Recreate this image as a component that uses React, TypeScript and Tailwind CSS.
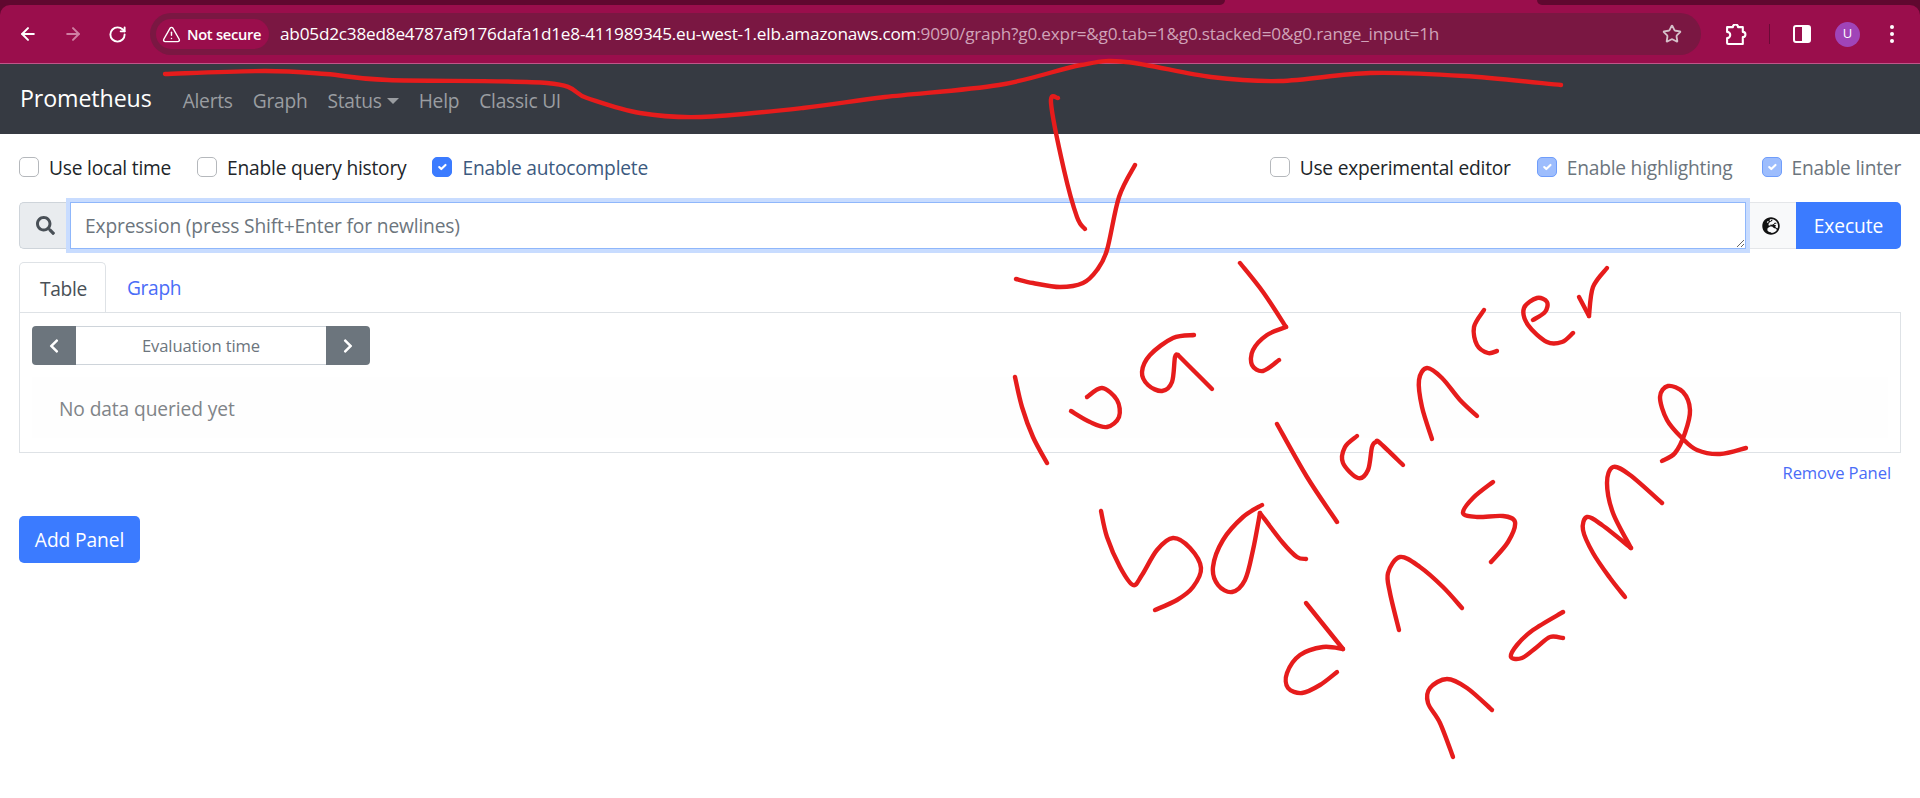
import React from 'react';
import { ArrowLeft, ArrowRight, RotateCw, TriangleAlert, Star } from 'lucide-react';
import { FaSearch, FaGlobeEurope, FaChevronLeft, FaChevronRight } from 'react-icons/fa';

type Pt = [number, number];

// red marker scribbles on top of the screenshot, split at sharp corners
const STROKES: Pt[][] = [
  [[165, 74], [265, 71], [326, 74], [388, 80], [547, 83], [587, 98], [640, 113], [701, 117], [803, 108], [885, 97], [999, 85], [1081, 65], [1126, 62], [1211, 77], [1280, 81], [1370, 73], [1464, 76], [1561, 85]],
  [[1058, 98], [1051, 103], [1064, 170], [1077, 217], [1085, 229]],
  [[1135, 165], [1119, 197], [1107, 250], [1097, 270], [1083, 283], [1060, 287], [1033, 283], [1016, 279]],
  [[1015, 377], [1022, 407], [1033, 437], [1047, 463]],
  [[1071, 411], [1090, 422], [1107, 427], [1119, 417], [1117, 400], [1102, 388], [1087, 397]],
  [[1194, 335], [1173, 338], [1150, 355], [1142, 372], [1148, 385], [1162, 391], [1172, 382], [1175, 357], [1178, 355]],
  [[1178, 355], [1195, 372], [1212, 389]],
  [[1240, 263], [1263, 292], [1286, 327]],
  [[1286, 327], [1267, 335], [1253, 350], [1252, 365], [1263, 371], [1279, 360]],
  [[1101, 511], [1107, 537], [1120, 567], [1133, 585], [1142, 575], [1157, 550], [1173, 538], [1190, 548], [1201, 568], [1193, 587], [1177, 600], [1155, 610]],
  [[1262, 505], [1243, 517], [1223, 540], [1213, 567], [1218, 585], [1232, 592], [1245, 580], [1253, 550], [1260, 513]],
  [[1260, 513], [1283, 543], [1297, 557], [1306, 559]],
  [[1277, 424], [1307, 477], [1337, 522]],
  [[1357, 436], [1345, 447], [1343, 463], [1358, 478], [1368, 470], [1372, 447], [1376, 442], [1380, 443], [1403, 465]],
  [[1432, 439], [1422, 407], [1419, 380], [1427, 368], [1442, 378], [1460, 400], [1477, 416]],
  [[1484, 310], [1474, 327], [1477, 345], [1488, 353], [1497, 351]],
  [[1533, 320], [1545, 312], [1547, 302], [1537, 298], [1524, 308], [1528, 325], [1547, 342], [1562, 342], [1573, 333]],
  [[1579, 297], [1589, 316]],
  [[1589, 316], [1593, 287], [1607, 268]],
  [[1306, 603], [1343, 649]],
  [[1343, 649], [1323, 647], [1300, 655], [1287, 673], [1288, 688], [1302, 693], [1320, 685], [1337, 672]],
  [[1399, 630], [1390, 593], [1388, 573], [1400, 557], [1420, 567], [1443, 587], [1462, 608]],
  [[1493, 482], [1473, 498], [1463, 513], [1477, 517], [1503, 516], [1515, 522], [1508, 542], [1491, 562]],
  [[1453, 757], [1440, 723], [1428, 703], [1430, 688], [1447, 679], [1467, 688], [1492, 710]],
  [[1563, 612], [1533, 630], [1517, 645], [1511, 657], [1522, 658], [1537, 647], [1550, 637], [1563, 638]],
  [[1625, 597], [1610, 578], [1593, 553], [1583, 530], [1587, 517], [1602, 525], [1631, 548]],
  [[1631, 548], [1613, 513], [1607, 483], [1613, 467], [1630, 475], [1662, 503]],
  [[1662, 461], [1675, 453], [1685, 433], [1690, 410], [1683, 392], [1668, 386], [1660, 397], [1667, 420], [1682, 438], [1697, 450], [1720, 454], [1746, 448]],
];

// catmull-rom through the points so the marker line stays smooth
const toPath = (pts: Pt[]) => {
  let d = `M${pts[0][0]} ${pts[0][1]}`;
  for (let i = 0; i < pts.length - 1; i++) {
    const p0 = pts[Math.max(i - 1, 0)];
    const p1 = pts[i];
    const p2 = pts[i + 1];
    const p3 = pts[Math.min(i + 2, pts.length - 1)];
    const c1x = p1[0] + (p2[0] - p0[0]) / 6;
    const c1y = p1[1] + (p2[1] - p0[1]) / 6;
    const c2x = p2[0] - (p3[0] - p1[0]) / 6;
    const c2y = p2[1] - (p3[1] - p1[1]) / 6;
    d += ` C${c1x} ${c1y} ${c2x} ${c2y} ${p2[0]} ${p2[1]}`;
  }
  return d;
};

const Check = ({ checked, faded }: { checked?: boolean; faded?: boolean }) => (
  <span
    className={
      'flex h-[20px] w-[20px] shrink-0 items-center justify-center rounded-[5px] border ' +
      (checked
        ? faded
          ? 'border-[#6f9dfb] bg-[#9dbdfd]'
          : 'border-[#3b7bff] bg-[#3b7bff]'
        : 'border-[#b5b8bc] bg-white')
    }
  >
    {checked && (
      <svg width="14" height="14" viewBox="0 0 20 20" fill="none" stroke="#fff" strokeWidth="3" strokeLinecap="round" strokeLinejoin="round">
        <path d="M6 10l3 3l6-6" />
      </svg>
    )}
  </span>
);

const Option = ({ label, checked, faded, color }: { label: string; checked?: boolean; faded?: boolean; color: string }) => (
  <label className="flex items-center gap-[10px]">
    <Check checked={checked} faded={faded} />
    <span className={'pt-[2px] tracking-[-0.22px] ' + color}>{label}</span>
  </label>
);

export default function App() {
  return (
    <div className="relative h-[798px] w-full overflow-hidden bg-white font-['Open_Sans',sans-serif] text-[19.2px] tracking-[-0.1px]">
      {/* Browser chrome */}
      <div className="bg-[#60082f]">
        <div className="flex h-[5px] bg-[#9a0e4c]">
          <div className="w-[1225px] rounded-br-[5px] bg-[#60082f]" />
          <div className="ml-auto w-[383px] rounded-bl-[5px] bg-[#60082f]" />
        </div>
        <div className="flex h-[59px] items-center rounded-t-[10px] border-b border-[#c0568a] bg-[#9a0e4c] pl-[18px]">
          <ArrowLeft size={20} strokeWidth={2.4} className="text-white" />
          <ArrowRight size={20} strokeWidth={2.4} className="ml-[25px] text-[#cf7fa3]" />
          <RotateCw size={19} strokeWidth={2.4} className="ml-[25px] text-white" />
          <div className="ml-[23px] flex h-[42px] w-[1551px] shrink-0 items-center rounded-full bg-[#7a1742] pr-[19px] pl-[6px]">
            <div className="flex h-[30px] w-[113px] items-center gap-[6px] rounded-full bg-[#9a0e4c] pl-[6px] text-[14.7px] font-semibold tracking-[-0.3px] text-white">
              <TriangleAlert size={19} strokeWidth={1.8} />
              <span>Not secure</span>
            </div>
            <div className="ml-[11px] text-[17.2px] tracking-[-0.21px] text-white">
              ab05d2c38ed8e4787af9176dafa1d1e8-411989345.eu-west-1.elb.amazonaws.com
              <span className="text-[#cfa3b8]">:9090/graph?g0.expr=&amp;g0.tab=1&amp;g0.stacked=0&amp;g0.range_input=1h</span>
            </div>
            <Star size={20} strokeWidth={2.2} className="ml-auto text-[#d5c0c9]" />
          </div>
          <svg width="22" height="21" viewBox="0 0 21 20" className="ml-[24px] shrink-0" fill="none" stroke="#fff" strokeWidth="2" strokeLinejoin="round">
            <path d="M2 3H7.5a2.5 2.5 0 0 1 5 0H17V7.5a2.5 2.5 0 0 1 0 5V19H3a1 1 0 0 1-1-1V13.5a3 3 0 0 0 0-6V3Z" />
          </svg>
          <div className="ml-[22px] h-[20px] w-px shrink-0 bg-[#6b0a36]" />
          <svg width="18" height="18" viewBox="0 0 18 18" className="ml-[23px] shrink-0">
            <rect x="1" y="1" width="16" height="16" rx="2" fill="none" stroke="#fff" strokeWidth="2" />
            <rect x="9" y="1" width="8" height="16" fill="#fff" />
          </svg>
          <div className="ml-[24px] flex h-[25px] w-[25px] shrink-0 items-center justify-center rounded-full bg-[#a044b8] text-[13px] text-white">U</div>
          <svg width="6" height="20" viewBox="0 0 6 20" className="ml-[29px] shrink-0" fill="#fff">
            <circle cx="3" cy="3" r="2" />
            <circle cx="3" cy="10" r="2" />
            <circle cx="3" cy="17" r="2" />
          </svg>
        </div>
      </div>

      {/* Prometheus navbar */}
      <nav className="flex h-[70px] items-center bg-[#363a42] pl-[20px]">
        <span className="pb-[2px] text-[23.2px] text-white">Prometheus</span>
        <div className="ml-[31px] flex items-center gap-[20px] pt-[5px] tracking-[-0.25px] text-[#9a9da1]">
          <span>Alerts</span>
          <span>Graph</span>
          <span className="flex items-center gap-[5px]">
            Status
            <span className="h-0 w-0 border-x-[6px] border-t-[6px] border-x-transparent border-t-[#9a9da1]" />
          </span>
          <span>Help</span>
          <span>Classic UI</span>
        </div>
      </nav>

      <main className="flex flex-col px-[19px]">
        {/* Options row */}
        <div className="mt-[21px] flex h-[24px] items-center">
          <div className="flex items-center gap-[26px]">
            <Option label="Use local time" color="text-[#212529]" />
            <Option label="Enable query history" color="text-[#212529]" />
            <Option label="Enable autocomplete" checked color="text-[#3c5a80]" />
          </div>
          <div className="ml-auto flex items-center gap-[26px]">
            <Option label="Use experimental editor" color="text-[#212529]" />
            <Option label="Enable highlighting" checked faded color="text-[#6c757d]" />
            <div className="ml-[3px]">
              <Option label="Enable linter" checked faded color="text-[#6c757d]" />
            </div>
          </div>
        </div>

        {/* Expression input */}
        <div className="mt-[23px] flex h-[47px] items-stretch">
          <div className="flex w-[51px] items-center justify-center rounded-l-[5px] border border-r-0 border-[#ced4da] bg-[#e9ecef] text-[#495057]">
            <FaSearch size={19} />
          </div>
          <textarea
            readOnly
            placeholder="Expression (press Shift+Enter for newlines)"
            className="z-10 h-[47px] flex-1 border border-[#8fb7fb] bg-white px-[14px] py-[9px] tracking-[-0.15px] text-[#212529] shadow-[0_0_0_4px_#c8dcff] outline-none placeholder:text-[#6c757d]"
          />
          <div className="flex w-[50px] items-center justify-center border-y border-[#e4e6e9] bg-[#f8f9fa] text-[#111]">
            <FaGlobeEurope size={18} />
          </div>
          <button className="w-[105px] rounded-r-[5px] bg-[#3b7bff] pt-[1px] text-white">Execute</button>
        </div>

        {/* Panel */}
        <div className="mt-[13px] flex items-end tracking-[-0.35px]">
          <div className="-mb-px flex h-[51px] w-[87px] items-center justify-center rounded-t-[5px] border border-b-0 border-[#dee2e6] bg-white pt-[3px] pl-[2px] text-[#495057]">
            Table
          </div>
          <div className="flex h-[50px] items-center pt-[3px] pl-[21px] text-[#4a6cf7]">Graph</div>
        </div>
        <div className="flex h-[141px] flex-col border border-[#dee2e6] px-[12px] pt-[13px]">
          <div className="flex h-[39px] w-[338px]">
            <button className="flex w-[44px] items-center justify-center rounded-l-[4px] bg-[#6c757d] text-white">
              <FaChevronLeft size={16} />
            </button>
            <div className="flex flex-1 items-center justify-center border-y border-[#ced4da] pt-[2px] text-[16.6px] text-[#6c757d]">
              Evaluation time
            </div>
            <button className="flex w-[44px] items-center justify-center rounded-r-[4px] bg-[#6c757d] text-white">
              <FaChevronRight size={16} />
            </button>
          </div>
          <div className="mt-[12px] flex h-[61px] items-center bg-[#fefefe] pt-[4px] pl-[27px] text-[#808488]">No data queried yet</div>
        </div>
        <div className="mt-[7px] mr-[10px] mb-[1px] h-[25px] self-end text-[16.6px] leading-[25px] text-[#4a6cf7]">Remove Panel</div>

        <button className="mt-[30px] h-[47px] w-[121px] self-start rounded-[5px] bg-[#3b7bff] pt-[2px] text-white">Add Panel</button>
      </main>

      {/* Red annotation overlay */}
      <svg className="pointer-events-none absolute inset-0 z-20" width="1920" height="798" fill="none" stroke="#e61c1c" strokeWidth="4.4" strokeLinecap="round" strokeLinejoin="round">
        {STROKES.map((s, i) => (
          <path key={i} d={toPath(s)} />
        ))}
      </svg>
    </div>
  );
}
